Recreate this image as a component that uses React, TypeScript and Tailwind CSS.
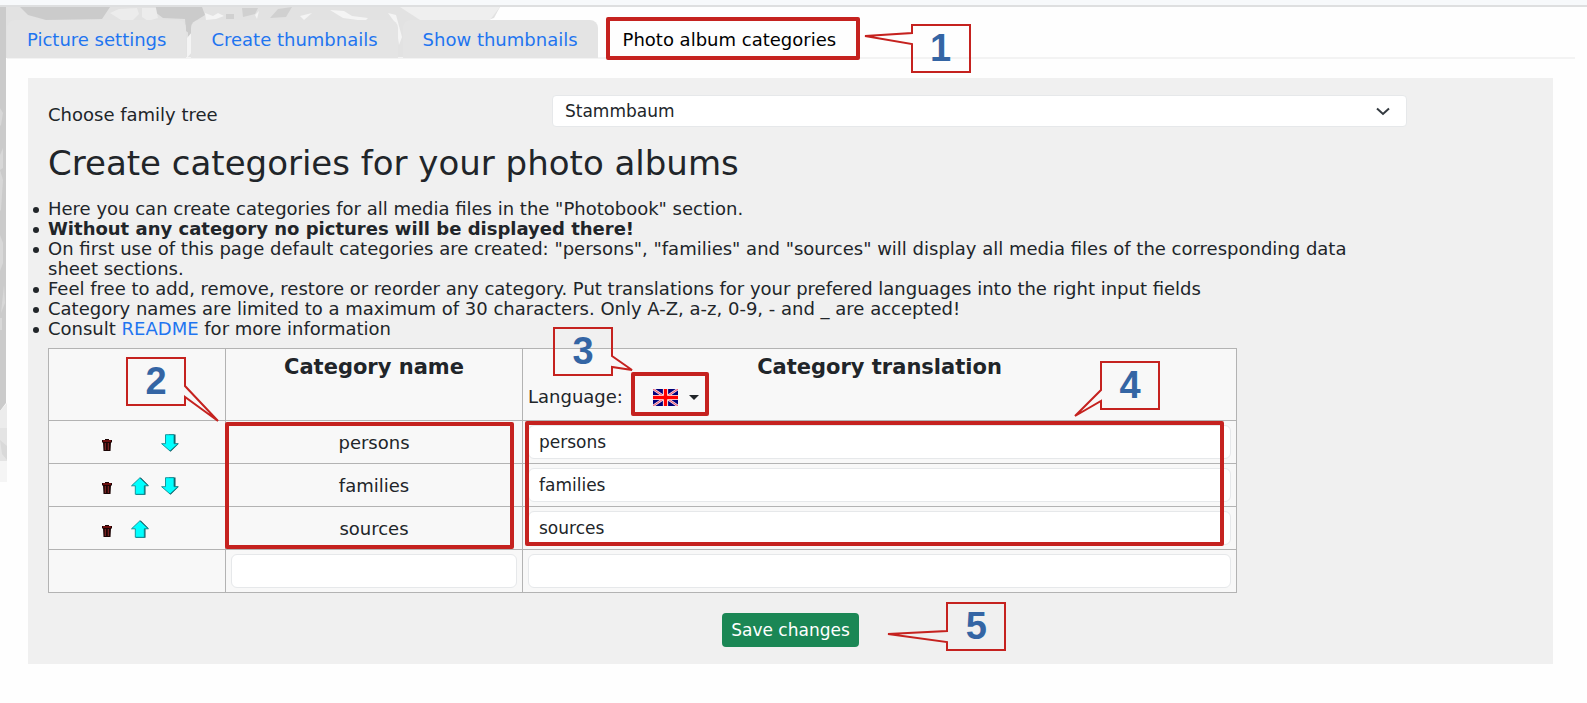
import React from "react";

const SANS = "font-['DejaVu_Sans',sans-serif]";

type Pt = { x: number; y: number };

type CalloutProps = { n: number; tip: Pt; side: "left" | "right"; place: string; notch?: number };

/** Speech-bubble marker: a 60x49 box with a pointer to `tip`, relative to the box's corner. */
function Callout({ n, tip, side, place, notch = 29 }: CalloutProps) {
  const pts =
    side === "left"
      ? `1,1 59,1 59,48 1,48 1,${notch + 11} ${tip.x},${tip.y} 1,${notch}`
      : `59,${notch} 59,1 1,1 1,48 59,48 59,${notch + 11} ${tip.x},${tip.y}`;
  return (
    <span className={`pointer-events-none absolute z-20 block h-[49px] w-[60px] ${place}`}>
      <svg className="absolute inset-0 overflow-visible" width="60" height="49" aria-hidden="true">
        <polygon points={pts} fill="none" stroke="#c5221f" strokeWidth="2" />
      </svg>
      <span className="relative block text-center font-['Liberation_Sans',Arial,sans-serif] text-[38px] leading-[49px] font-bold text-[#3465a4]">
        {n}
      </span>
    </span>
  );
}

function Frame({ place }: { place: string }) {
  return <span className={`pointer-events-none absolute z-10 block rounded-xs border-4 border-[#c5221f] ${place}`} />;
}

function Trash() {
  return (
    <svg width="12" height="12" viewBox="0 0 12 12" aria-hidden="true">
      <path d="M4 0h4v1h3v2.500h-1L9.500 12h-7L2 3.500H1V1h3z" fill="#1c0505" />
      <path d="M2 2h8" stroke="#a01414" strokeWidth="1.200" />
      <path d="M4.300 4v7M7.300 4v7" stroke="#8f2a2a" strokeWidth="1" />
    </svg>
  );
}

function Arrow({ down = false }: { down?: boolean }) {
  return (
    <svg width="18" height="18" viewBox="0 0 18 18" aria-hidden="true">
      {down ? (
        <>
          <path d="M5 .5h9.500v9H18L9.500 17.800 8 16V.5z" fill="#0b4f57" />
          <path d="M4.500 .7h8.500v9h4L9 17 .6 9.700h3.900z" fill="#00ffff" stroke="#0d8a92" strokeWidth="0.9" />
        </>
      ) : (
        <>
          <path d="M9.500 .2L18 8.800h-3.500v8.900H5V9z" fill="#0b4f57" />
          <path d="M8.800 .9L.5 8.800h3.800v8.500H13.300V8.800h3.900z" fill="#00ffff" stroke="#0d8a92" strokeWidth="0.9" />
        </>
      )}
    </svg>
  );
}

function Flag() {
  return (
    <svg width="25" height="17" viewBox="0 0 25 17" aria-hidden="true">
      <rect width="25" height="17" fill="#00007b" />
      <path d="M0 0l25 17M25 0L0 17" stroke="#f4d6e4" strokeWidth="2.600" />
      <path d="M0 0l25 17M25 0L0 17" stroke="#f0304a" strokeWidth="0.800" />
      <path d="M12.500 0v17M0 8.500h25" stroke="#fff" strokeWidth="5.200" />
      <path d="M12.500 0v17M0 8.500h25" stroke="#ff0000" strokeWidth="3.400" />
    </svg>
  );
}

function MapBackdrop() {
  return (
    <svg className="absolute top-0 left-0 -z-10" width="530" height="500" aria-hidden="true">
      <path d="M0 7H500L494 18 482 22 460 58H7V58H0z" fill="#e2e2e2" />
      <path d="M400 7H500L490 20H420z" fill="#efefef" />
      <path d="M20 7h90l-8 12-56 1-18-5z M156 7h46l3 8-8 5-7 14-4-3-1-12-22-1-8-6z M188 20h5v18h-5z" fill="#cbcbcb" />
      <path d="M242 8l16 0-3 6-12 3z M270 18l8-9 14-2-6 10z M226 14h8v5h-8z" fill="#d0d0d0" />
      <path d="M110 13l9-4 18-1 2 6-6 6h-12z M142 8h14l2 10-10 3-6-4z" fill="#ececec" />
      <path d="M205 13l8 3 5-3 6 3-8 3-10 1z M330 10l14 1 8 5 16 2-3 3-22-3z M388 13l8 2 6 22-3 8-3-21z M187 38l5-6v20l-5 6z M255 15l4-4-2 8z M300 16l12-3-8 7z" fill="#f4f4f4" />
      <path d="M0 7H6V403L0 411z" fill="#cbcbcb" />
      <path d="M0 108l3 5-2 12-1 1z M0 155l3-7v20l-3 2z M0 170l3 10-2 30-1 1z M0 235l3 8v20l-3 8z M4 285l1 18-4 10z M0 318h2v12H0z" fill="#d8d8d8" />
      <path d="M0 411L7 403V428H0z" fill="#ececec" />
      <path d="M0 428H7V461H0z" fill="#e4e4e4" />
      <path d="M0 440l7 6v14l-5-6z" fill="#d9d9d9" />
      <path d="M0 461H7V482H0z" fill="#f5f5f5" />
    </svg>
  );
}

const tabs = ["Picture settings", "Create thumbnails", "Show thumbnails"];
const rows = ["persons", "families", "sources"];

const cell = "border border-[#b3b3b3]";
const field =
  "block h-[34px] w-full rounded-md border border-[#e6e8ea] bg-white px-[10px] text-[17px] leading-6 text-[#212529] outline-none";
const bullet =
  "before:-ml-[15px] before:mr-[9px] before:inline-block before:size-[6px] before:rounded-full before:bg-current before:align-middle before:content-['']";

export default function App() {
  return (
    <div className={`relative isolate min-h-screen text-[18px] leading-5 text-[#212529] ${SANS}`}>
      <div className="absolute inset-0 -z-20 bg-[#fefefe]" />
      <MapBackdrop />
      <div className="h-[7px] border-b-2 border-[#dedfe0] bg-[#f7f9fb]" />
      <div className="pt-[13px] pl-[7px]">
        <nav className="mr-3 flex h-[39px] gap-[5px] border-b-2 border-[#f3f3f3]">
          {tabs.map((t) => (
            <a key={t} href="#" className="h-[38px] rounded-t-lg bg-[#e4e4e4] px-5 leading-[39px] text-[#1f75f0]">
              {t}
            </a>
          ))}
          <a href="#" aria-current="page" className="relative h-[38px] px-5 leading-[39px] text-black">
            Photo album categories
            <Frame place="-top-[3px] left-[3px] h-[43px] w-[254px]" />
            <Callout n={1} side="left" notch={9} tip={{ x: -46, y: 12 }} place="top-1 left-[308px]" />
          </a>
        </nav>

        <div className="bg-[#fefefe] pt-[19px] pr-[34px] pb-[39px] pl-[21px]">
          <main className="bg-[#f0f0f0] px-5 py-[17px]">
            <div className="flex h-8">
              <label htmlFor="tree" className="w-1/3 pt-[10px]">
                Choose family tree
              </label>
              <div className="relative ml-[9px] w-[855px]">
                <select
                  id="tree"
                  className="h-8 w-full appearance-none rounded-sm border border-[#e6e8ea] bg-white px-3 text-[17px] outline-none"
                >
                  <option>Stammbaum</option>
                </select>
                <svg className="pointer-events-none absolute top-3 right-[17px]" width="14" height="9" aria-hidden="true">
                  <path d="M1 1.500l6 5.500 6-5.500" fill="none" stroke="#343a40" strokeWidth="2" />
                </svg>
              </div>
            </div>

            <h1 className="pt-4 text-[34px] leading-[40px]">Create categories for your photo albums</h1>

            <ul className="w-[1320px] pt-4">
              <li className={bullet}>Here you can create categories for all media files in the "Photobook" section.</li>
              <li className={`font-bold ${bullet}`}>Without any category no pictures will be displayed there!</li>
              <li className={bullet}>
                On first use of this page default categories are created: "persons", "families" and "sources" will
                display all media files of the corresponding data sheet sections.
              </li>
              <li className={bullet}>
                Feel free to add, remove, restore or reorder any category. Put translations for your prefered languages
                into the right input fields
              </li>
              <li className={bullet}>
                Category names are limited to a maximum of 30 characters. Only A-Z, a-z, 0-9, - and _ are accepted!
              </li>
              <li className={bullet}>
                Consult{" "}
                <a href="#" className="text-[#1f75f0]">
                  README
                </a>{" "}
                for more information
              </li>
            </ul>

            <table className="mt-[9px] w-[1189px] table-fixed border-collapse bg-[#f8f8f8]">
              <colgroup>
                <col className="w-[177px]" />
                <col className="w-[297px]" />
                <col />
              </colgroup>
              <thead>
                <tr className="h-[72px] align-top">
                  <td className={`relative ${cell}`}>
                    <Callout n={2} side="right" tip={{ x: 92, y: 64 }} place="top-2 left-[77px]" />
                  </td>
                  <th className={`pt-2 text-[21px] leading-5 ${cell}`}>Category name</th>
                  <th className={`relative px-[5px] pt-2 text-[21px] leading-5 ${cell}`}>
                    Category translation
                    <div className="flex h-9 items-center text-[18px] font-normal">
                      <span className="pt-1">Language:</span>
                      <button type="button" aria-label="Language" className="ml-[30px] flex items-center gap-[11px] pt-1">
                        <Flag />
                        <svg width="10" height="5" aria-hidden="true">
                          <path d="M0 0h10L5 5z" fill="#212529" />
                        </svg>
                      </button>
                    </div>
                    <Frame place="top-[23px] left-[108px] h-11 w-[78px]" />
                    <Callout n={3} side="right" tip={{ x: 79, y: 43 }} place="-top-[22px] left-[30px]" />
                    <Callout n={4} side="left" tip={{ x: -25, y: 55 }} place="top-3 left-[577px]" />
                  </th>
                </tr>
              </thead>
              <tbody>
                {rows.map((r, i) => (
                  <tr key={r} className="h-[43px]">
                    <td className={`pt-[2px] ${cell}`}>
                      <div className="flex items-center pl-[52px]">
                        <button type="button" aria-label={`Delete ${r}`} className="mt-1 w-[30px]">
                          <Trash />
                        </button>
                        <span className="w-[30px]">
                          {i > 0 && (
                            <button type="button" aria-label={`Move ${r} up`} className="block">
                              <Arrow />
                            </button>
                          )}
                        </span>
                        {i < 2 && (
                          <button type="button" aria-label={`Move ${r} down`} className="block">
                            <Arrow down />
                          </button>
                        )}
                      </div>
                    </td>
                    <td className={`relative pt-[2px] text-center ${cell}`}>
                      {r}
                      {i === 0 && <Frame place="top-[1px] -left-[1px] h-[127px] w-[289px]" />}
                    </td>
                    <td className={`relative px-[5px] ${cell}`}>
                      <input aria-label={`Translation of ${r}`} defaultValue={r} className={field} />
                      {i === 0 && <Frame place="top-0 left-[2px] h-[125px] w-[699px]" />}
                    </td>
                  </tr>
                ))}
                <tr className="h-[43px]">
                  <td className={cell} />
                  <td className={`px-[5px] ${cell}`}>
                    <input aria-label="New category name" className={field} />
                  </td>
                  <td className={`px-[5px] ${cell}`}>
                    <input aria-label="New category translation" className={field} />
                  </td>
                </tr>
              </tbody>
            </table>

            <div className="flex justify-center pt-5">
              <div className="relative">
                <button type="button" className="block h-[34px] rounded-sm bg-[#1b8755] px-[9px] text-[17px] text-white">
                  Save changes
                </button>
                <Callout n={5} side="left" tip={{ x: -58, y: 32 }} place="-top-[11px] left-[224px]" />
              </div>
            </div>
          </main>
        </div>
      </div>
    </div>
  );
}
